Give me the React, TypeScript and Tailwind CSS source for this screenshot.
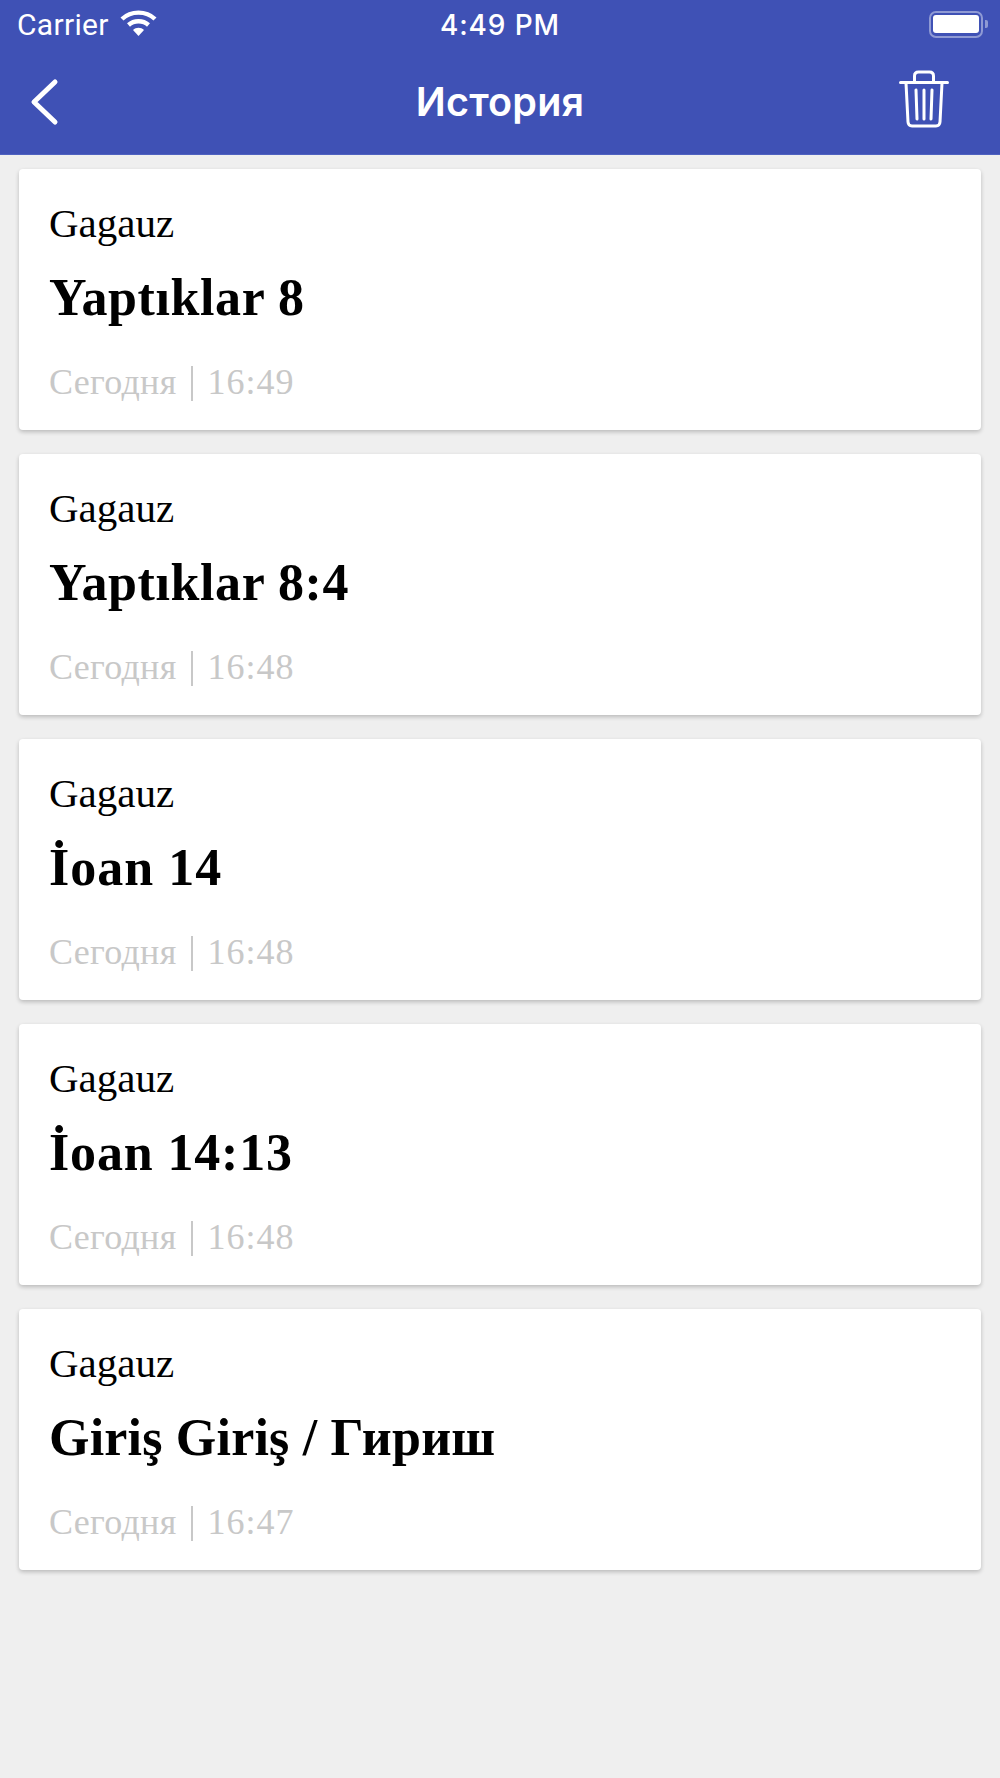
const items = [
  { title: "Yaptıklar 8", time: "16:49", track: "tracking-[0.6px]" },
  { title: "Yaptıklar 8:4", time: "16:48", track: "tracking-[0.6px]" },
  { title: "İoan 14", time: "16:48", track: "tracking-[1px]" },
  { title: "İoan 14:13", time: "16:48", track: "tracking-[0.85px]" },
  { title: "Giriş Giriş / Гириш", time: "16:47", track: "tracking-[0.2px]" },
];

function Card({ title, time, track }: { title: string; time: string; track: string }) {
  return (
    <div className="flex h-[261px] flex-col rounded-[4px] bg-white pl-[30px] pt-[30px] shadow-[0_2px_4px_rgba(0,0,0,0.22)] font-['Liberation_Serif',serif]">
      <div className="h-[48px] text-[41px] leading-[48px] text-black">Gagauz</div>
      <div className={`mt-[21px] h-[60px] text-[52px] font-bold leading-[60px] text-black ${track}`}>{title}</div>
      <div className="mt-[32px] flex h-[44px] items-center text-[36px] leading-[44px] tracking-[0.3px] text-[#c8c8c8]">
        <span>Сегодня</span>
        <span className="ml-[14px] mr-[15px] mt-[2px] h-[35px] w-[2px] bg-[#c8c8c8]" />
        <span className="tracking-[1px]">{time}</span>
      </div>
    </div>
  );
}

export default function App() {
  return (
    <div className="flex min-h-[1778px] flex-col bg-[#efefef] font-['Inter',sans-serif]">
      <header className="h-[155px] border-b border-[#4f62c0] bg-[#3f51b5] text-white">
        <div className="relative flex h-[50px] items-center justify-between pl-[17px] pr-[12px]">
          <div className="flex items-center gap-[11px]">
            <span className="text-[30px] leading-[48px] tracking-[0.3px] font-['Roboto',sans-serif]">Carrier</span>
            <svg width="37" height="28" viewBox="0 0 37 28" fill="none" stroke="white" strokeWidth="4.4" className="-mt-[5px]">
              <path d="M2 10 C11 1.5 26 1.5 35 10" />
              <path d="M8.5 16 C14 11 23 11 28.5 16" />
              <path d="M13 21 L18.5 27 L24 21 C21 18 16 18 13 21 Z" fill="white" stroke="none" />
            </svg>
          </div>
          <span className="absolute left-0 right-0 text-center text-[28px] font-medium leading-[48px] tracking-[0.9px]">4:49 PM</span>
          <div className="-mt-[2px] flex items-center">
            <div className="flex h-[27px] w-[54px] items-center justify-center rounded-[7px] border-2 border-[#8f9ad4]">
              <div className="h-[18px] w-[46px] rounded-[3px] bg-white" />
            </div>
            <div className="ml-[2px] h-[8px] w-[3px] rounded-r-[2px] bg-[#8f9ad4]" />
          </div>
        </div>
        <div className="relative flex h-[104px] items-center justify-between pl-[29px] pr-[51px]">
          <svg width="30" height="48" viewBox="0 0 30 48" fill="none" stroke="white" strokeWidth="5" strokeLinecap="round" strokeLinejoin="round">
            <path d="M26 4 L5 24 L26 44" />
          </svg>
          <span className="absolute left-0 right-0 text-center text-[39.5px] font-semibold leading-[48px] tracking-[0.2px]">История</span>
          <svg width="50" height="58" viewBox="0 0 50 58" fill="none" stroke="white" strokeWidth="3" strokeLinecap="round" strokeLinejoin="round" className="-mt-[6px]">
            <path d="M1.5 12.5 H48.5" />
            <path d="M15.5 12 V6 Q15.5 2 19.5 2 H30.5 Q34.5 2 34.5 6 V12" />
            <path d="M7 13 L9 52 Q9.3 56 13 56 H37 Q40.7 56 41 52 L43 13" />
            <path d="M17 20 L18 49 M25 20 V49 M33 20 L32 49" />
          </svg>
        </div>
      </header>
      <main className="flex flex-col gap-[24px] px-[19px] pt-[14px]">
        {items.map((it, i) => (
          <Card key={i} title={it.title} time={it.time} track={it.track} />
        ))}
      </main>
    </div>
  );
}
